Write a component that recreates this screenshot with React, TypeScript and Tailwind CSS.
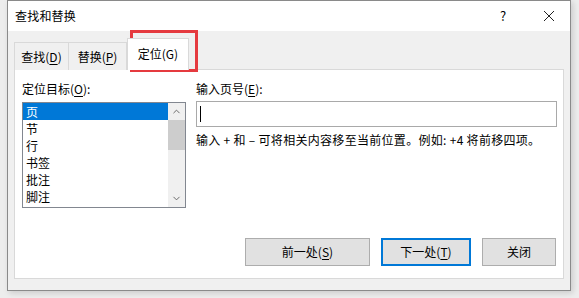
import { ChevronDown, ChevronUp } from 'lucide-react';

const items = ['页', '节', '行', '书签', '批注', '脚注'];

function Acc({ k }: { k: string }) {
  return <span className="underline underline-offset-2">{k}</span>;
}

export default function App() {
  return (
    <div
      className="relative w-[579px] h-[298px] bg-[#ededed] pl-[7px] text-[12px] leading-[16px] text-black"
      style={{ fontFamily: '"Noto Sans CJK SC", "Noto Sans", sans-serif' }}
    >
      {/* Window */}
      <div className="w-[564px] h-[291px] border border-[#8a8a8a] bg-[#f0f0f0] flex flex-col shadow-[2px_2px_6px_rgba(0,0,0,0.15)]">
        {/* Title bar */}
        <div className="h-[30px] bg-white flex items-center pl-[7px] pr-[12px] pb-[1px]">
          <span className="flex-1 tracking-[0.2px]">查找和替换</span>
          <span className="w-[14px] text-center mr-[33px] text-[13px]">?</span>
          <svg width="12" height="12" viewBox="0 0 12 12" className="mr-[3px]">
            <path d="M1 1 L11 11 M11 1 L1 11" stroke="#222" strokeWidth="1" />
          </svg>
        </div>

        {/* Body */}
        <div className="flex-1 flex flex-col px-[6px] pt-[7px] pb-[11px]">
          {/* Tabs */}
          <div className="flex items-end h-[32px] -mb-[1px] relative z-10">
            <div className="h-[28px] w-[55px] border border-b-0 border-[#d9d9d9] bg-[#f0f0f0] flex items-center justify-center">
              查找(<Acc k="D" />)
            </div>
            <div className="h-[28px] w-[58px] border border-l-0 border-b-0 border-[#d9d9d9] bg-[#f0f0f0] flex items-center justify-center">
              替换(<Acc k="P" />)
            </div>
            <div className="h-[32px] w-[62px] border border-b-0 border-[#d9d9d9] bg-white flex items-center justify-center pb-[2px]">
              定位(G)
            </div>
          </div>

          {/* Panel */}
          <div className="flex-1 bg-white border border-[#d9d9d9] flex flex-col pl-[7px] pr-[6px] pt-[11px] pb-[12px]">
            <div className="flex gap-[10px]">
              {/* Left column */}
              <div className="w-[164px] flex flex-col">
                <div className="h-[16px]">
                  定位目标(<Acc k="O" />):
                </div>
                <div className="mt-[5px] h-[106px] border border-[#828790] flex">
                  <div className="flex-1 flex flex-col">
                    {items.map((it, i) => (
                      <div
                        key={it}
                        className={
                          i === 0
                            ? 'h-[17px] pl-[3px] flex items-center bg-[#0078d7] text-white'
                            : 'h-[17px] pl-[3px] flex items-center'
                        }
                      >
                        {it}
                      </div>
                    ))}
                  </div>
                  {/* Scrollbar */}
                  <div className="w-[17px] bg-[#f0f0f0] flex flex-col">
                    <div className="h-[17px] flex items-center justify-center text-[#606060]">
                      <ChevronUp size={11} strokeWidth={2} />
                    </div>
                    <div className="h-[30px] bg-[#cdcdcd]" />
                    <div className="flex-1" />
                    <div className="h-[17px] flex items-center justify-center text-[#606060]">
                      <ChevronDown size={11} strokeWidth={2} />
                    </div>
                  </div>
                </div>
              </div>

              {/* Right column */}
              <div className="flex-1 flex flex-col">
                <div className="h-[16px]">
                  输入页号(<Acc k="E" />):
                </div>
                <div className="mt-[4px] h-[26px] border border-[#a9a9a9] flex items-center pl-[3px]">
                  <div className="w-[1px] h-[16px] bg-black" />
                </div>
                <div className="mt-[5px] tracking-[0.3px] whitespace-pre">输入 + 和 – 可将相关内容移至当前位置。例如: +4 将前移四项。</div>
              </div>
            </div>

            {/* Buttons */}
            <div className="mt-auto flex justify-end gap-[11px] pr-[1px]">
              <button className="w-[125px] h-[28px] bg-[#e1e1e1] border border-[#adadad]">
                前一处(<Acc k="S" />)
              </button>
              <button className="w-[90px] h-[28px] bg-[#e1e1e1] border-2 border-[#0078d7]">
                下一处(<Acc k="T" />)
              </button>
              <button className="w-[74px] h-[28px] bg-[#e1e1e1] border border-[#adadad]">关闭</button>
            </div>
          </div>
        </div>
      </div>

      {/* Red annotation box */}
      <div className="absolute left-[130px] top-[30px] w-[68px] h-[42px] border-[3px] border-[#e53a3f]" />
    </div>
  );
}
